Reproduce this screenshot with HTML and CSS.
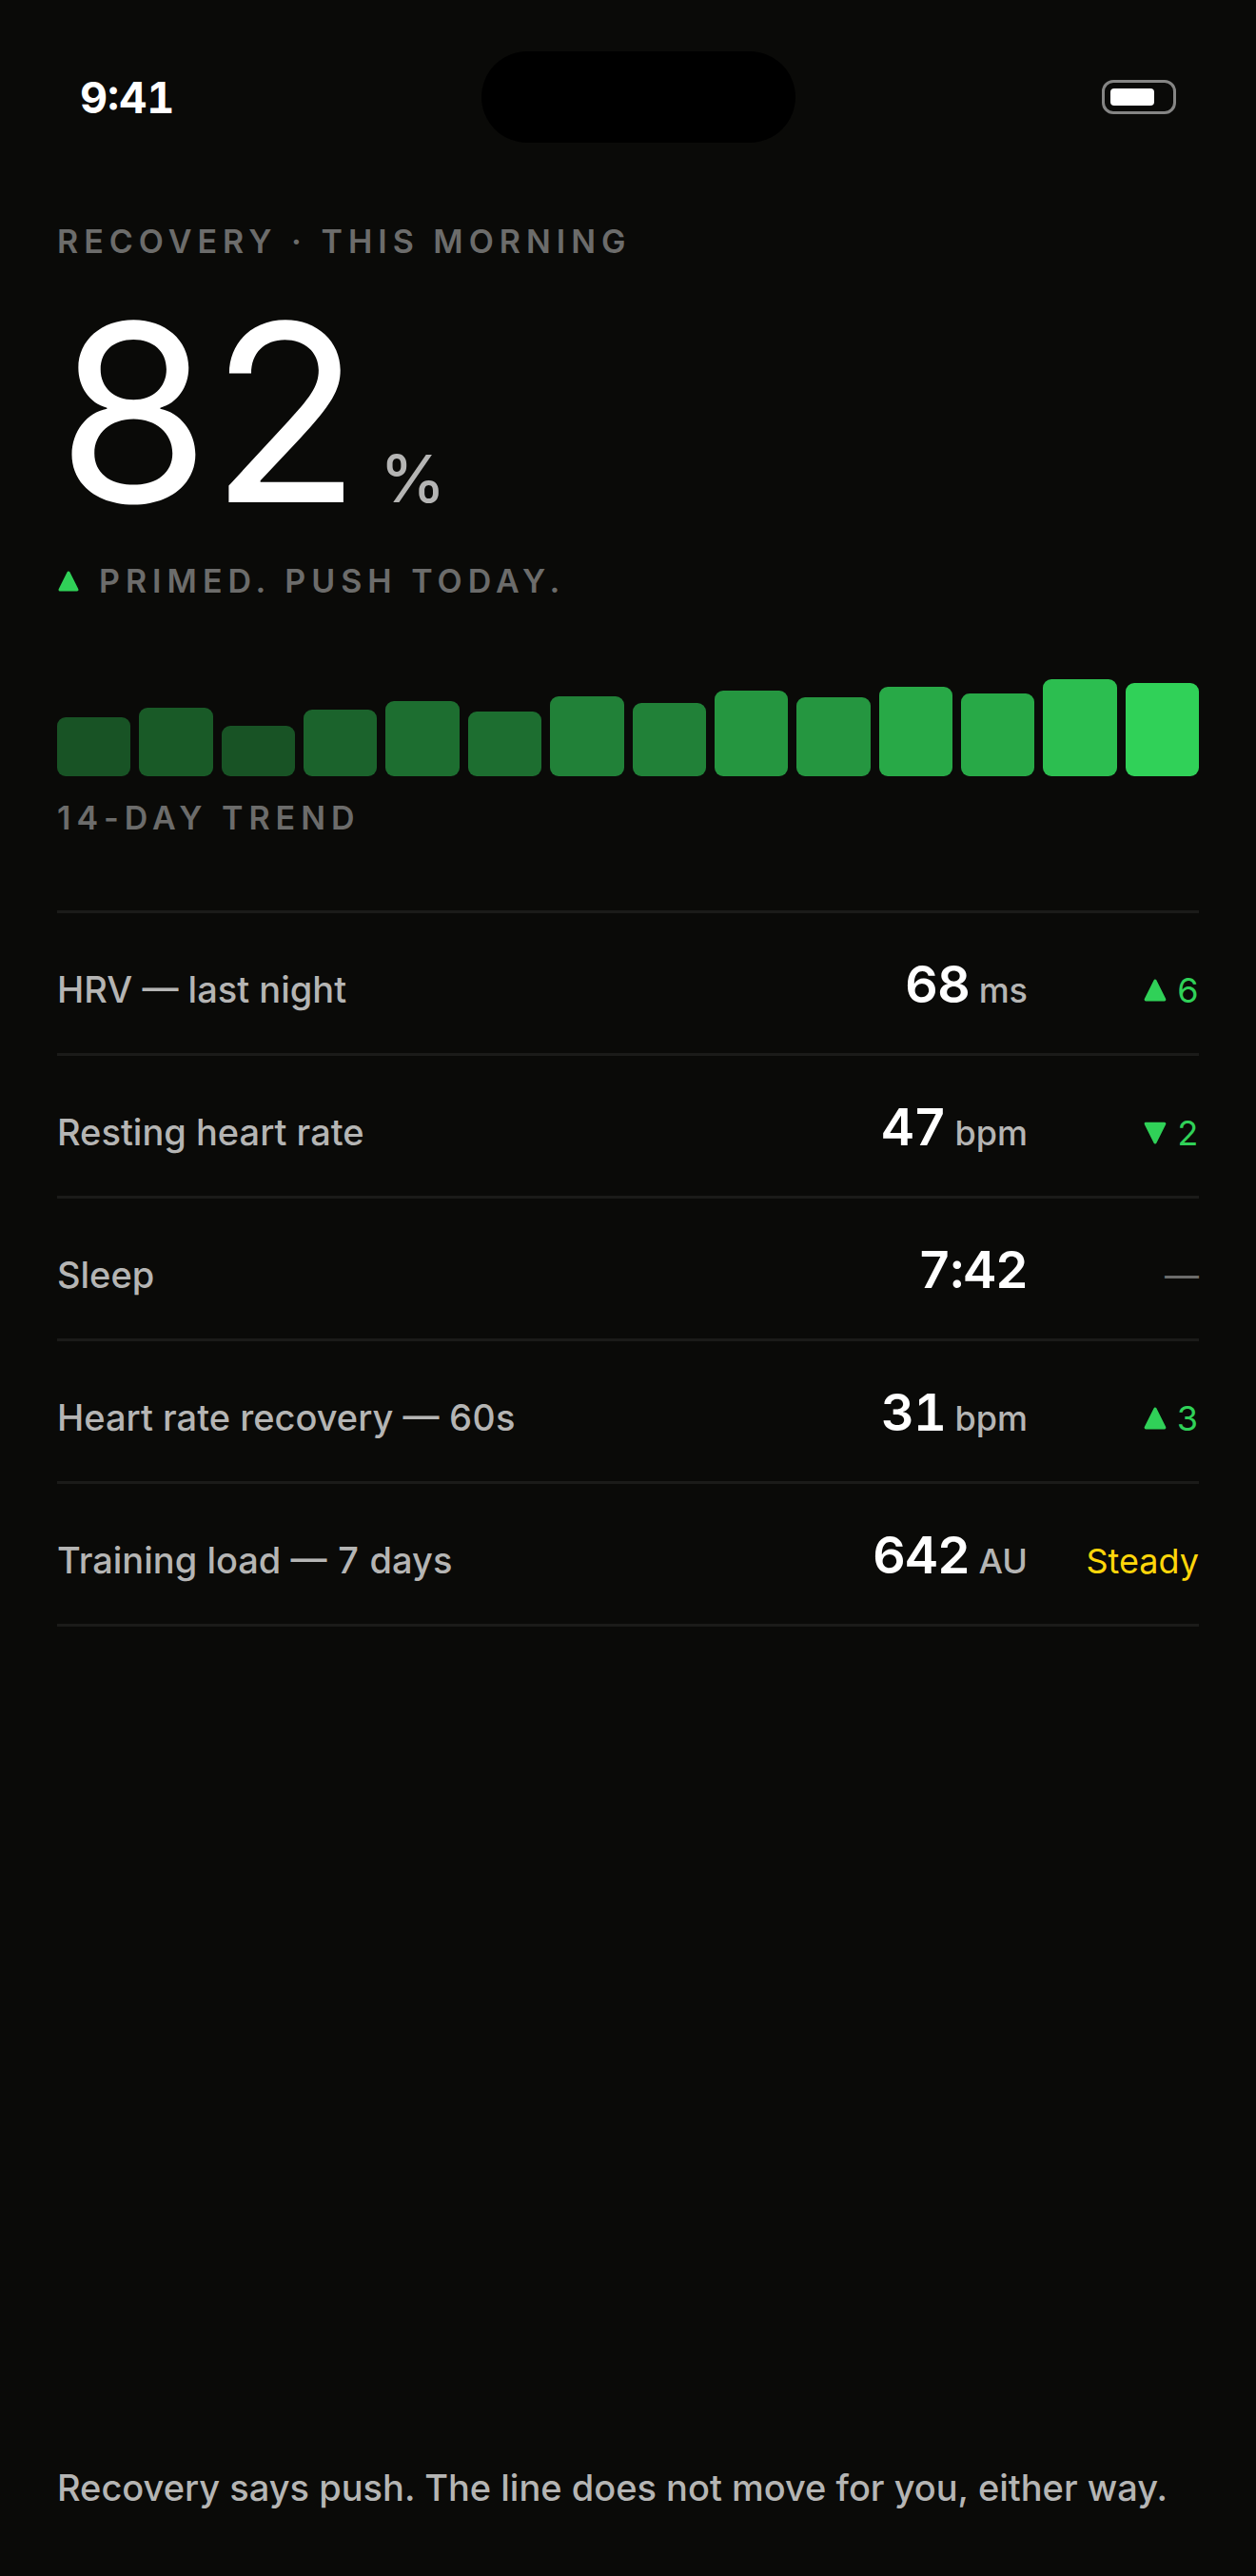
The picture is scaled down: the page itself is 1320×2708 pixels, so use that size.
FILE: index.html
```html
<!DOCTYPE html>
<html lang="en">
<head>
  <meta charset="utf-8">
  <meta name="viewport" content="width=device-width, initial-scale=1.0">
  <title>Recovery</title>
  <link rel="stylesheet" href="styles.css">
</head>
<body>

  <!-- Status bar -->
  <div class="status-bar">
    <span class="time">9:41</span>
    <div class="island"></div>
    <div class="battery"><div class="battery-level"></div></div>
  </div>

  <main>
    <!-- Score -->
    <h1 class="eyebrow">Recovery · This morning</h1>
    <div class="score">
      <span class="score-number">82</span>
      <span class="score-unit">%</span>
    </div>
    <p class="eyebrow verdict">
      <svg class="arrow" viewBox="0 0 24 24"><path d="M12 3 21 21H3Z"/></svg>
      Primed. Push today.
    </p>

    <!-- Trend -->
    <div class="trend">
      <div class="bar" style="height: 57%; opacity: .37"></div>
      <div class="bar" style="height: 67%; opacity: .4"></div>
      <div class="bar" style="height: 49%; opacity: .37"></div>
      <div class="bar" style="height: 65%; opacity: .45"></div>
      <div class="bar" style="height: 73%; opacity: .5"></div>
      <div class="bar" style="height: 63%; opacity: .5"></div>
      <div class="bar" style="height: 78%; opacity: .6"></div>
      <div class="bar" style="height: 71%; opacity: .6"></div>
      <div class="bar" style="height: 83%; opacity: .7"></div>
      <div class="bar" style="height: 77%; opacity: .7"></div>
      <div class="bar" style="height: 87%; opacity: .8"></div>
      <div class="bar" style="height: 81%; opacity: .8"></div>
      <div class="bar" style="height: 94%; opacity: .91"></div>
      <div class="bar" style="height: 91%"></div>
    </div>
    <p class="eyebrow trend-label">14-day trend</p>

    <!-- Metrics -->
    <table class="metrics">
      <tr>
        <th scope="row">HRV — last night</th>
        <td class="value">68<span class="unit"> ms</span></td>
        <td class="delta good"><svg class="arrow" viewBox="0 0 24 24"><path d="M12 3 21 21H3Z"/></svg>6</td>
      </tr>
      <tr>
        <th scope="row">Resting heart rate</th>
        <td class="value">47<span class="unit"> bpm</span></td>
        <td class="delta good"><svg class="arrow" viewBox="0 0 24 24"><path d="M3 3H21L12 21Z"/></svg>2</td>
      </tr>
      <tr>
        <th scope="row">Sleep</th>
        <td class="value">7:42</td>
        <td class="delta">—</td>
      </tr>
      <tr>
        <th scope="row">Heart rate recovery — 60s</th>
        <td class="value">31<span class="unit"> bpm</span></td>
        <td class="delta good"><svg class="arrow" viewBox="0 0 24 24"><path d="M12 3 21 21H3Z"/></svg>3</td>
      </tr>
      <tr>
        <th scope="row">Training load — 7 days</th>
        <td class="value">642<span class="unit"> AU</span></td>
        <td class="delta steady">Steady</td>
      </tr>
    </table>
  </main>

  <footer>Recovery says push. The line does not move for you, either way.</footer>

</body>
</html>
```
FILE: styles.css
```css
:root {
  --bg: #0a0a08;
  --text: #ffffff;
  --text-soft: #b5b5b4;
  --text-dim: #6c6c6b;
  --line: #1b1b19;
  --green: #30d158;
  --yellow: #ffd60a;
}

/* Base */
* { box-sizing: border-box; }
body {
  margin: 0;
  min-height: 100vh;
  display: flex;
  flex-direction: column;
  background: var(--bg);
  color: var(--text);
  font-family: Inter, "Liberation Sans", sans-serif;
}
p, h1 { margin: 0; }

/* Status bar */
.status-bar {
  display: flex;
  align-items: center;
  justify-content: space-between;
  padding: 54px 84px 0;
}
.time {
  font-size: 45px;
  font-weight: 700;
  font-variant-numeric: tabular-nums;
}
.island {
  width: 330px;
  height: 96px;
  border-radius: 48px;
  background: #000;
}
.battery {
  width: 78px;
  height: 36px;
  padding: 6px;
  border: 3px solid #858584;
  border-radius: 12px;
}
.battery-level {
  width: 46px;
  height: 100%;
  border-radius: 4px;
  background: var(--text);
}

/* Score */
main { padding: 84px 60px 0; }
.eyebrow {
  font-size: 34px;
  line-height: 40px;
  font-weight: 600;
  letter-spacing: 6px;
  text-transform: uppercase;
  color: var(--text-dim);
}
.score {
  display: flex;
  align-items: baseline;
  gap: 20px;
  margin-top: 32px;
}
.score-number {
  font-size: 260px;
  line-height: 256px;
  font-weight: 400;
}
.score-unit {
  font-size: 69px;
  font-weight: 500;
  color: var(--text-soft);
}
.arrow {
  width: 24px;
  height: 24px;
  fill: var(--green);
  stroke: var(--green);
  stroke-width: 3;
  stroke-linejoin: round;
}
.verdict {
  display: flex;
  align-items: center;
  gap: 20px;
  margin-top: 29px;
}

/* 14-day trend */
.trend {
  display: flex;
  align-items: flex-end;
  gap: 9px;
  height: 108px;
  margin-top: 77px;
}
.bar {
  flex: 1;
  border-radius: 9px;
  background: var(--green);
}
.trend-label { margin-top: 24px; }

/* Metrics */
.metrics {
  width: 100%;
  margin-top: 77px;
  border-top: 3px solid var(--line);
  border-spacing: 0;
  font-variant-numeric: tabular-nums;
}
.metrics th,
.metrics td {
  height: 150px;
  padding: 39px 0 24px;
  border-bottom: 3px solid var(--line);
  vertical-align: baseline;
  line-height: 72px;
}
.metrics th {
  font-size: 38px;
  font-weight: 500;
  text-align: left;
  color: var(--text-soft);
}
.value {
  font-size: 54px;
  font-weight: 600;
  letter-spacing: -1px;
  text-align: right;
  white-space: nowrap;
}
.unit {
  font-size: 36px;
  font-weight: 500;
  letter-spacing: 0;
  color: var(--text-soft);
}
.metrics .delta {
  width: 180px;
  font-size: 36px;
  text-align: right;
  color: var(--text-dim);
}
.metrics .good { color: var(--green); }
.metrics .steady { color: var(--yellow); }
.delta .arrow {
  width: 26px;
  height: 26px;
  margin-right: 10px;
}

/* Footer */
footer {
  margin-top: auto;
  padding: 0 60px 66px;
  font-size: 38px;
  font-weight: 500;
  line-height: 54px;
  color: var(--text-soft);
}
```
